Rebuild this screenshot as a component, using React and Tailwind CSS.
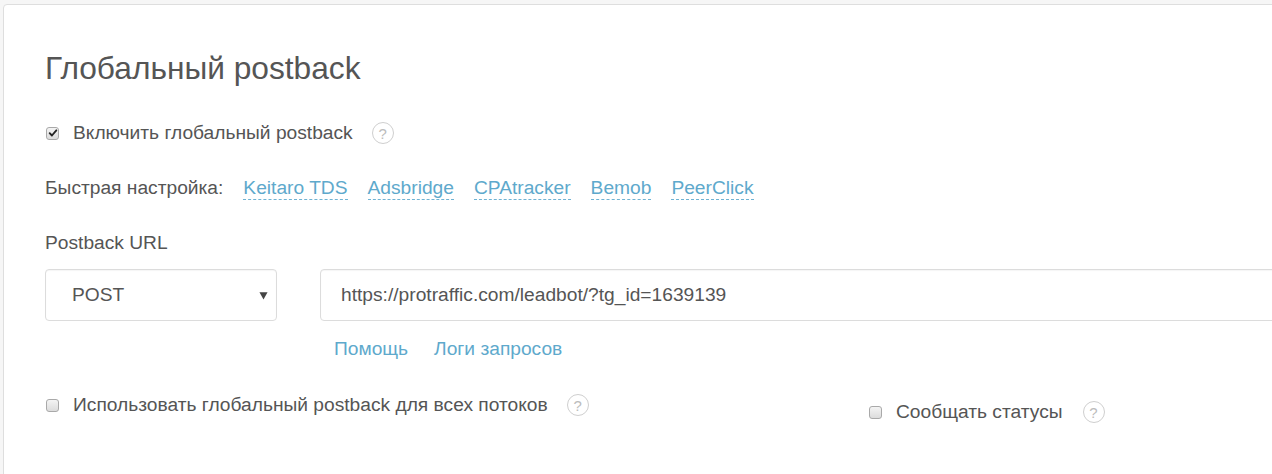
import React from "react";

function Help() {
  return (
    <span className="inline-flex h-[22px] w-[22px] items-center justify-center rounded-full border border-[#cfcfcf] text-[15px] leading-none text-[#bcbcbc]">
      ?
    </span>
  );
}

function Box({ checked }) {
  return (
    <span className="relative inline-flex h-[13px] w-[13px] items-center justify-center rounded-[3px] border border-[#a9a9a9] bg-gradient-to-b from-[#f4f4f4] to-[#dcdcdc]">
      {checked && (
        <svg viewBox="0 0 12 12" className="h-[10px] w-[10px]">
          <path d="M2 6.2 L4.7 9 L10 2.8" fill="none" stroke="#222" strokeWidth="2.2" strokeLinecap="round" strokeLinejoin="round" />
        </svg>
      )}
    </span>
  );
}

function QuickLink({ children }) {
  return (
    <span className="border-b border-dashed border-[#6fb3d3] text-[#5ea9cc] leading-[23px]">{children}</span>
  );
}

export default function App() {
  return (
    <div className="h-[474px] w-[1272px] overflow-hidden bg-[#f6f6f6] pl-[3px] pt-[4px] font-['Liberation_Sans',Arial,sans-serif] text-[19.2px] leading-[24px] text-[#555]">
      <div className="h-[600px] w-[1400px] rounded-tl-[4px] border border-[#dedede] bg-white pl-[41px] pt-[43px]">
        <h1 className="text-[31.7px] leading-[40px] text-[#555]">Глобальный postback</h1>

        <div className="mt-[33px] flex h-[24px] items-center">
          <span className="ml-[1px] flex"><Box checked /></span>
          <span className="ml-[14px]">Включить глобальный postback</span>
          <span className="ml-[19px] flex"><Help /></span>
        </div>

        <div className="mt-[31px] flex items-start">
          <span className="leading-[23px]">Быстрая настройка:</span>
          <span className="ml-[20px] flex gap-[20px]">
            <QuickLink>Keitaro TDS</QuickLink>
            <QuickLink>Adsbridge</QuickLink>
            <QuickLink>CPAtracker</QuickLink>
            <QuickLink>Bemob</QuickLink>
            <QuickLink>PeerClick</QuickLink>
          </span>
        </div>

        <div className="mt-[31px]">Postback URL</div>

        <div className="mt-[14px] flex">
          <div className="flex h-[52px] w-[232px] items-center justify-between rounded-[4px] border border-[#dcdcdc] pl-[26px] pr-[8px] shadow-[inset_0_1px_1px_rgba(0,0,0,0.04)]">
            <span>POST</span>
            <svg viewBox="0 0 10 10" className="h-[9px] w-[9px]">
              <path d="M0.5 1.5 H9.5 L5 9.5 Z" fill="#444" />
            </svg>
          </div>
          <div className="ml-[43px] flex h-[52px] flex-1 items-center rounded-[4px] border border-[#dcdcdc] pl-[20px] shadow-[inset_0_1px_1px_rgba(0,0,0,0.04)]">
            https://protraffic.com/leadbot/?tg_id=1639139
          </div>
        </div>

        <div className="mt-[16px] flex pl-[289px] text-[#5ea9cc]">
          <span>Помощь</span>
          <span className="ml-[26px]">Логи запросов</span>
        </div>

        <div className="mt-[32px] flex items-start">
          <div className="flex h-[24px] w-[823px] items-center">
            <span className="ml-[1px] flex"><Box /></span>
            <span className="ml-[14px]">Использовать глобальный postback для всех потоков</span>
            <span className="ml-[19px] flex"><Help /></span>
          </div>
          <div className="mt-[7px] flex h-[24px] items-center">
            <span className="ml-[1px] flex"><Box /></span>
            <span className="ml-[14px]">Сообщать статусы</span>
            <span className="ml-[20px] flex"><Help /></span>
          </div>
        </div>
      </div>
    </div>
  );
}
